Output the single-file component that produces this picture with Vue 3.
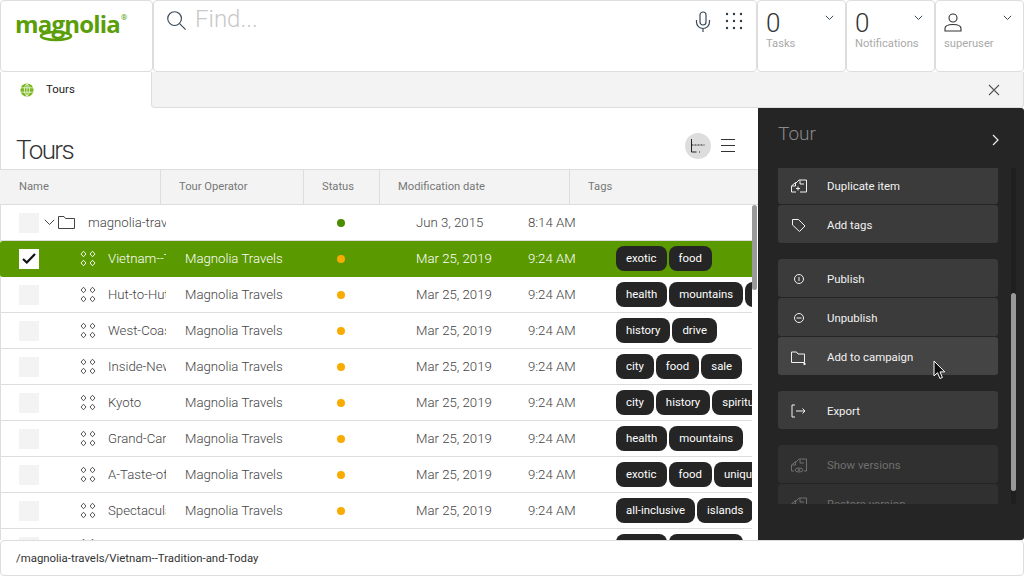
<script setup>
const columns = [
  { label: 'Name', width: 161 },
  { label: 'Tour Operator', width: 143 },
  { label: 'Status', width: 76 },
  { label: 'Modification date', width: 190 },
  { label: 'Tags', width: 187 },
]

const tours = [
  { name: 'Vietnam--Tradition-and-Today', tags: ['exotic', 'food'], selected: true },
  { name: 'Hut-to-Hut-in-the-Swiss-Alps', tags: ['health', 'mountains', 'sport'] },
  { name: 'West-Coast-Road-Trip', tags: ['history', 'drive'] },
  { name: 'Inside-New-York', tags: ['city', 'food', 'sale'] },
  { name: 'Kyoto', tags: ['city', 'history', 'spiritual'] },
  { name: 'Grand-Canyon', tags: ['health', 'mountains'] },
  { name: 'A-Taste-of-Malaysia', tags: ['exotic', 'food', 'unique'] },
  { name: 'Spectacular-Thailand', tags: ['all-inclusive', 'islands'] },
  { name: 'Beach-Holiday', tags: ['health', 'mountains'] },
]

const groups = [
  [
    { label: 'Duplicate item', icon: 'copy' },
    { label: 'Add tags', icon: 'tag' },
  ],
  [
    { label: 'Publish', icon: 'publish' },
    { label: 'Unpublish', icon: 'unpublish' },
    { label: 'Add to campaign', icon: 'campaign', hover: true },
  ],
  [{ label: 'Export', icon: 'export' }],
  [
    { label: 'Show versions', icon: 'versions', disabled: true },
    { label: 'Restore version', icon: 'copy', disabled: true },
  ],
]

const stats = [
  { value: '0', label: 'Tasks' },
  { value: '0', label: 'Notifications' },
]
</script>

<template>
  <div class="page">
    <header class="topbar">
      <div class="card logo">
        <span class="logo-text">magnolia</span>
        <span class="logo-reg">®</span>
        <svg class="logo-swoosh" width="36" height="12" viewBox="0 0 36 12">
          <ellipse cx="18" cy="6" rx="15" ry="4" fill="none" stroke="#5a9e0a" stroke-width="2.6" />
        </svg>
      </div>
      <div class="card search">
        <svg class="search-icon" width="21" height="21" viewBox="0 0 22 22" fill="none" stroke="#3a4a58" stroke-width="1.2">
          <circle cx="9" cy="9" r="7.2" />
          <path d="M14 14l6.500 6.500" />
        </svg>
        <span class="find">Find...</span>
        <svg class="mic" width="16" height="22" viewBox="0 0 16 22" fill="none" stroke="#3a4a58" stroke-width="1.2">
          <rect x="5" y="1" width="6" height="13" rx="3" />
          <path d="M1.500 9v2a6.500 6.500 0 0 0 13 0V9M8 17.500V21" />
        </svg>
        <svg class="dots" width="18" height="18" viewBox="0 0 18 18" fill="#2e3a44">
          <circle cx="2" cy="2" r="1.2" /><circle cx="9" cy="2" r="1.2" /><circle cx="16" cy="2" r="1.2" />
          <circle cx="2" cy="9" r="1.2" /><circle cx="9" cy="9" r="1.2" /><circle cx="16" cy="9" r="1.2" />
          <circle cx="2" cy="16" r="1.2" /><circle cx="9" cy="16" r="1.2" /><circle cx="16" cy="16" r="1.2" />
        </svg>
      </div>
      <div v-for="s in stats" :key="s.label" class="card stat">
        <span class="stat-value">{{ s.value }}</span>
        <span class="stat-label">{{ s.label }}</span>
        <svg class="stat-caret" width="9" height="6" viewBox="0 0 9 6" fill="none" stroke="#3a4a58"><path d="M.8.8l3.700 3.700L8.200.8" /></svg>
      </div>
      <div class="card stat">
        <svg class="user" width="18" height="19" viewBox="0 0 18 19" fill="none" stroke="#333" stroke-width="1.1">
          <circle cx="9" cy="5" r="4" />
          <path d="M1 18v-2.500C1 13 4 11.500 9 11.500s8 1.500 8 4V18z" />
        </svg>
        <span class="stat-label">superuser</span>
        <svg class="stat-caret" width="9" height="6" viewBox="0 0 9 6" fill="none" stroke="#3a4a58"><path d="M.8.8l3.700 3.700L8.200.8" /></svg>
      </div>
    </header>

    <nav class="tabs">
      <div class="tab">
        <svg width="14" height="14" viewBox="0 0 16 16" fill="none">
          <circle cx="8" cy="8" r="7.500" fill="#7ab51d" />
          <path d="M1 5.500h14M1 10.500h14M8 1v14M8 1C4 4 4 12 8 15M8 1c4 3 4 11 0 14" stroke="#fff" stroke-width=".8" />
        </svg>
        <span>Tours</span>
      </div>
      <div class="tab-rest">
        <svg width="12" height="12" viewBox="0 0 12 12" stroke="#555" stroke-width="1.100"><path d="M1 1l10 10M11 1L1 11" /></svg>
      </div>
    </nav>

    <main class="main">
      <section class="content">
        <div class="title-row">
          <h1>Tours</h1>
          <div class="view-btn">
            <svg width="16" height="16" viewBox="0 0 16 16" fill="none" stroke="#222" stroke-width="1">
              <path d="M1.500 1v13h5" />
              <path d="M1.500 7h13M9 14h1" stroke-dasharray="2 1" />
            </svg>
          </div>
          <svg class="list-btn" width="14" height="13" viewBox="0 0 14 13" stroke="#333" stroke-width="1"><path d="M0 .5h14M0 6.500h14M0 12.500h14" /></svg>
        </div>

        <div class="thead">
          <div v-for="c in columns" :key="c.label" class="th" :style="{ width: c.width + 'px' }">{{ c.label }}</div>
        </div>

        <div class="tbody">
          <div class="scroll-thumb"></div>
          <div class="row">
            <div class="cell-name">
              <span class="check"></span>
              <svg class="caret" width="11" height="7" viewBox="0 0 11 7" fill="none" stroke="#444"><path d="M.8.8l4.700 4.700L10.200.8" /></svg>
              <svg class="folder" width="17" height="13" viewBox="0 0 17 13" fill="none" stroke="#444"><path d="M.5.500h5.500l1.500 2h9v10H.5z" /></svg>
              <span class="name folder-name">magnolia-travels</span>
            </div>
            <div class="cell-op"></div>
            <div class="cell-status"><i class="dot green"></i></div>
            <div class="cell-date">Jun 3, 2015</div>
            <div class="cell-time">8:14 AM</div>
            <div class="cell-tags"></div>
          </div>

          <div v-for="t in tours" :key="t.name" class="row" :class="{ selected: t.selected }">
            <div class="cell-name">
              <span class="check">
                <svg v-if="t.selected" width="14" height="11" viewBox="0 0 14 11" fill="none" stroke="#111" stroke-width="2.200"><path d="M1 6l3.800 3.500L13 1" /></svg>
              </span>
              <svg class="handle" width="16" height="17" viewBox="0 0 16 17" fill="none" stroke="currentColor" stroke-width=".9" stroke-linejoin="round">
                <path d="M3.500 1.200l2.500 2.800-2.500 2.800L1 4zM12.500 1.200l2.500 2.800-2.500 2.800L10 4zM3.500 10.200l2.500 2.800-2.500 2.800L1 13zM12.500 10.200l2.500 2.800-2.500 2.800L10 13z" />
              </svg>
              <span class="name">{{ t.name }}</span>
            </div>
            <div class="cell-op">Magnolia Travels</div>
            <div class="cell-status"><i class="dot amber"></i></div>
            <div class="cell-date">Mar 25, 2019</div>
            <div class="cell-time">9:24 AM</div>
            <div class="cell-tags">
              <span v-for="tag in t.tags" :key="tag" class="tag">{{ tag }}</span>
            </div>
          </div>
        </div>
      </section>

      <aside class="panel">
        <div class="panel-head">
          <h2>Tour</h2>
          <svg width="8" height="12" viewBox="0 0 8 12" fill="none" stroke="#eee" stroke-width="1.200"><path d="M1 1l5 5-5 5" /></svg>
        </div>
        <div class="panel-body">
          <div class="actions">
            <div class="actions-inner">
              <div v-for="(g, i) in groups" :key="i" class="group">
                <div v-for="a in g" :key="a.label" class="action" :class="{ hover: a.hover, disabled: a.disabled }">
                  <svg class="action-icon" width="16" height="16" viewBox="0 0 16 16" fill="none" stroke="currentColor">
                    <template v-if="a.icon === 'copy'">
                      <path d="M.5 14V8L4.500 4.500V8H.5M.5 14H5M5 5L8 2h7.500v12H9M9 2.500V6h4M9 10.500H5M7 8.500v4" />
                    </template>
                    <template v-else-if="a.icon === 'versions'">
                      <path d="M.5 14V8L4.500 4.500V8H.5M.5 14H3M5 5L8 2h7.500v12H13M9 2.500V6h4" />
                      <ellipse cx="8" cy="13" rx="4" ry="2" /><circle cx="8" cy="13" r=".8" />
                    </template>
                    <path v-else-if="a.icon === 'tag'" d="M1.500 2.500h6l6.500 6.500-5.500 5.500L1.500 8z" />
                    <template v-else-if="a.icon === 'publish'">
                      <circle cx="8" cy="8" r="4.500" /><path d="M8 6v4" />
                    </template>
                    <template v-else-if="a.icon === 'unpublish'">
                      <circle cx="8" cy="8" r="4.500" /><path d="M5.500 8h5" />
                    </template>
                    <path v-else-if="a.icon === 'campaign'" d="M.5 3h5l1.500 2h6.500v8.500H.5zM12 15h3M13.500 13.500v3" />
                    <path v-else-if="a.icon === 'export'" d="M4 2H1v12h3M5 8h9M11.500 5.500L14 8l-2.500 2.500" />
                  </svg>
                  <span>{{ a.label }}</span>
                </div>
              </div>
            </div>
          </div>
          <div class="panel-track"><div class="panel-thumb"></div></div>
        </div>
        <svg class="cursor" width="14" height="20" viewBox="0 0 14 20">
          <path d="M1 1v15l3.500-3.300 2.400 5.800 2.500-1-2.400-5.600h4.800z" fill="#111" stroke="#fff" stroke-width="1" />
        </svg>
      </aside>
    </main>

    <footer class="footer">/magnolia-travels/Vietnam--Tradition-and-Today</footer>
  </div>
</template>

<style scoped>
.page {
  width: 1024px;
  height: 576px;
  display: flex;
  flex-direction: column;
  overflow: hidden;
  background: #fff;
  font-family: Roboto, "Liberation Sans", sans-serif;
  color: #555;
}

.topbar {
  display: flex;
  height: 72px;
  flex: none;
}

.card {
  position: relative;
  box-sizing: border-box;
  border: 1px solid #ddd;
  border-radius: 4px;
  background: #fff;
}

.logo {
  width: 153px;
}

.logo-text {
  position: absolute;
  left: 14px;
  top: 8px;
  font-family: "Open Sans", sans-serif;
  font-weight: 700;
  font-size: 24px;
  line-height: 30px;
  letter-spacing: -0.8px;
  color: #5a9e0a;
}

.logo-reg {
  position: absolute;
  left: 120px;
  top: 12px;
  font-size: 8px;
  line-height: 10px;
  color: #5a9e0a;
}

.logo-swoosh {
  position: absolute;
  left: 37px;
  top: 29px;
}

.search {
  width: 604px;
  display: flex;
  align-items: flex-start;
  padding: 9px 12px 0 12px;
}

.find {
  margin-left: 8px;
  margin-top: -2px;
  font-size: 24px;
  font-weight: 300;
  line-height: 22px;
  color: #c8c8c8;
  flex: 1;
}

.mic {
  margin-top: 1px;
  margin-right: 14px;
}

.dots {
  margin-top: 2px;
  margin-right: 1px;
}

.stat {
  width: 89px;
  padding: 8px 0 0 8px;
  display: flex;
  flex-direction: column;
  align-items: flex-start;
}

.stat-value {
  font-size: 26px;
  font-weight: 300;
  line-height: 28px;
  color: #333;
}

.user {
  margin-top: 4px;
  margin-bottom: 5px;
}

.stat-label {
  font-size: 11.2px;
  line-height: 14px;
  color: #aaa;
}

.stat-caret {
  position: absolute;
  right: 11px;
  top: 14px;
}

.tabs {
  display: flex;
  height: 36px;
  flex: none;
}

.tab {
  width: 151px;
  box-sizing: border-box;
  display: flex;
  align-items: center;
  gap: 12px;
  padding-left: 19px;
  border-left: 1px solid #ddd;
  font-size: 11.4px;
  color: #222;
}

.tab span {
  margin-bottom: 2px;
}

.tab-rest {
  flex: 1;
  display: flex;
  align-items: center;
  justify-content: flex-end;
  padding-right: 23px;
  background: #f3f3f3;
  border: 1px solid #ddd;
  border-top: 0;
  border-radius: 0 0 4px 4px;
}

.main {
  position: relative;
  display: flex;
  height: 432px;
  flex: none;
}

.content {
  width: 758px;
  flex: none;
  display: flex;
  flex-direction: column;
  box-sizing: border-box;
  border-left: 1px solid #ddd;
}

.title-row {
  height: 61px;
  flex: none;
  display: flex;
  align-items: center;
  padding: 14px 23px 0 15px;
  box-sizing: border-box;
}

h1 {
  flex: 1;
  margin: 0;
  padding-top: 9px;
  font-size: 26px;
  font-weight: 300;
  letter-spacing: -1.6px;
  color: #333;
}

.view-btn {
  width: 26px;
  height: 26px;
  border-radius: 50%;
  background: #ddd;
  display: flex;
  align-items: center;
  justify-content: center;
  margin-right: 10px;
}

.thead {
  display: flex;
  height: 36px;
  flex: none;
  background: #f3f3f3;
  border-top: 1px solid #ddd;
  border-bottom: 1px solid #ddd;
  box-sizing: border-box;
  margin-left: -1px;
}

.th {
  box-sizing: border-box;
  padding-left: 18px;
  border-right: 1px solid #ddd;
  font-size: 11.2px;
  line-height: 34px;
  color: #777;
}

.th:first-child {
  padding-left: 19px;
}

.th:last-child {
  border-right: 0;
}

.tbody {
  position: relative;
  flex: 1;
  overflow: hidden;
  margin-left: -1px;
}

.scroll-thumb {
  position: absolute;
  right: 1px;
  top: 0;
  width: 5px;
  height: 85px;
  border-radius: 3px;
  background: #999;
  z-index: 1;
}

.row {
  display: flex;
  width: 752px;
  height: 36px;
  box-sizing: border-box;
  align-items: center;
  border-bottom: 1px solid #ddd;
  font-size: 13.2px;
  font-weight: 300;
  color: #444;
}

.row.selected {
  width: 757px;
  background: #5a9900;
  color: #fff;
  border-bottom-color: #5a9900;
  border-radius: 3px;
}

.cell-name {
  width: 185px;
  flex: none;
  display: flex;
  align-items: center;
}

.check {
  width: 20px;
  height: 20px;
  margin-left: 19px;
  flex: none;
  background: #f3f3f3;
  display: flex;
  align-items: center;
  justify-content: center;
}

.selected .check {
  background: #fff;
}

.caret {
  margin-left: 5px;
}

.folder {
  margin-left: 3px;
}

.handle {
  margin-left: 41px;
  flex: none;
}

.name {
  margin-left: 12px;
  width: 58px;
  flex: none;
  overflow: hidden;
  white-space: nowrap;
}

.folder-name {
  margin-left: 13px;
  width: 78px;
}

.cell-op {
  width: 151px;
  flex: none;
}

.cell-status {
  width: 80px;
  flex: none;
}

.dot {
  display: block;
  width: 8px;
  height: 8px;
  margin-left: 1px;
  border-radius: 50%;
}

.green {
  background: #4c8c00;
}

.amber {
  background: #f8ab00;
}

.cell-date {
  width: 112px;
  flex: none;
}

.cell-time {
  width: 88px;
  flex: none;
}

.cell-tags {
  width: 136px;
  flex: none;
  display: flex;
  gap: 2px;
  overflow: hidden;
}

.tag {
  flex: none;
  height: 25px;
  padding: 0 10px;
  border-radius: 8px;
  background: #252525;
  color: #fff;
  font-size: 11.4px;
  font-weight: 400;
  line-height: 24px;
}

.panel {
  position: relative;
  width: 266px;
  box-sizing: border-box;
  background: #252525;
  border-radius: 0 3px 3px 0;
  display: flex;
  flex-direction: column;
  color: #fff;
}

.panel-head {
  height: 60px;
  flex: none;
  display: flex;
  justify-content: space-between;
  padding: 14px 24px 0 20px;
  box-sizing: border-box;
}

.panel-head svg {
  margin-top: 12px;
}

h2 {
  margin: 0;
  font-size: 19px;
  font-weight: 300;
  line-height: 24px;
  color: #8a8a8a;
}

.panel-body {
  display: flex;
  height: 336px;
  flex: none;
}

.actions {
  width: 220px;
  margin-left: 20px;
  overflow: hidden;
}

.actions-inner {
  margin-top: -2px;
  display: flex;
  flex-direction: column;
  gap: 16px;
}

.group {
  display: flex;
  flex-direction: column;
  gap: 1px;
}

.action {
  height: 38px;
  display: flex;
  align-items: center;
  padding: 1px 0 0 13px;
  box-sizing: border-box;
  background: #3b3b3b;
  border-radius: 3px;
  font-size: 11.4px;
  color: #f2f2f2;
}

.action.hover {
  background: #444;
}

.action.disabled {
  background: #303030;
  color: #6f6f6f;
}

.action-icon {
  width: 16px;
  margin-right: 20px;
  flex: none;
}

.panel-track {
  width: 5px;
  margin-left: 13px;
  background: #1f1f1f;
  position: relative;
}

.panel-thumb {
  position: absolute;
  left: 0;
  top: 125px;
  width: 5px;
  height: 198px;
  border-radius: 3px;
  background: #999;
}

.cursor {
  position: absolute;
  left: 175px;
  top: 252px;
}

.footer {
  flex: none;
  height: 36px;
  box-sizing: border-box;
  padding-left: 15px;
  line-height: 35px;
  font-size: 11.4px;
  color: #333;
  border: 1px solid #ddd;
  border-radius: 4px;
  background: #fff;
  position: relative;
}
</style>
